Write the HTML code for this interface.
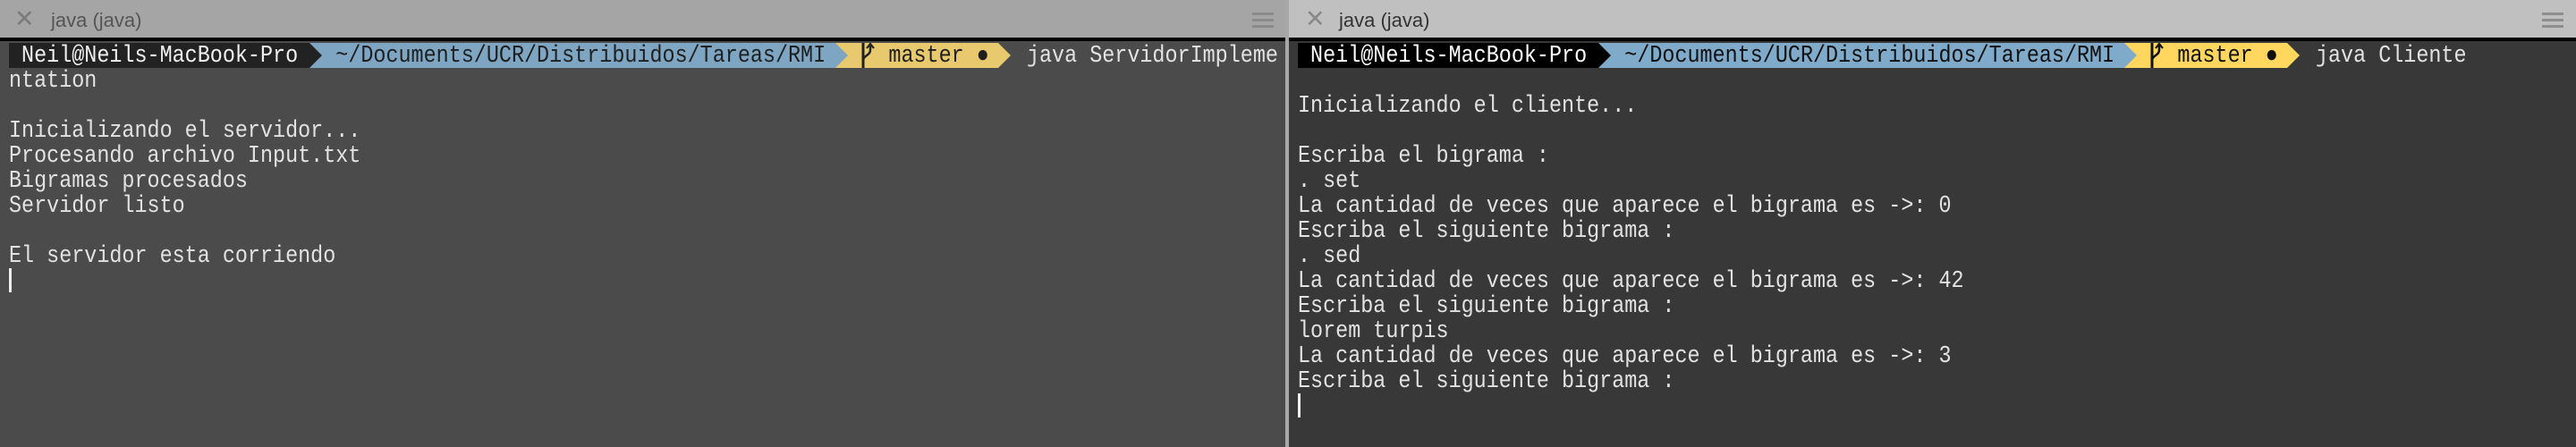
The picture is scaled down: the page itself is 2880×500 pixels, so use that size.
<!DOCTYPE html>
<html><head><meta charset="utf-8"><style>
html,body{margin:0;padding:0;width:2880px;height:500px;overflow:hidden;background:#383838}
.pane{position:absolute;top:0;height:500px;overflow:hidden}
.tab{position:absolute;left:0;top:0;right:0;height:42px;font-family:"Liberation Sans",sans-serif;font-size:22px}
.tab .x{position:absolute;left:16px;top:8px;font-size:27px;line-height:27px}
.tab .t{position:absolute;left:57px;top:10px}
.ham{position:absolute;top:14px;width:24px;height:18px}
.ham i{display:block;height:3px;margin-bottom:4px}
.line{position:absolute;left:0;right:0;top:42px;height:4px;background:#000}
.term{position:absolute;top:48px;left:10px;font-family:"Liberation Mono",monospace;font-size:26.5px;line-height:28px;color:#e2e2e2;white-space:pre;transform:scaleX(0.8834);transform-origin:0 0}
.seg{position:absolute;top:48px;height:28px}
.arr{position:absolute;top:48px;width:0;height:0;border-top:14px solid transparent;border-bottom:14px solid transparent;border-left:14px solid}
.cur{position:absolute;width:3px;height:27px;background:#eee}
</style></head><body>

<!-- LEFT PANE -->
<div class="pane" style="left:0;width:1437px;background:#4b4b4b">
  <div class="tab" style="background:#a5a5a5;color:#555">
    <span class="x" style="color:#7a7a7a">✕</span><span class="t">java (java)</span>
    <div class="ham" style="left:1400px"><i style="background:#8a8a8a"></i><i style="background:#8a8a8a"></i><i style="background:#8a8a8a"></i></div>
  </div>
  <div class="line"></div>
  <div class="seg" style="left:10px;width:336px;background:#222"></div>
  <div class="seg" style="left:346px;width:588px;background:#7ea6c3"></div>
  <div class="arr" style="left:346px;border-left-color:#222"></div>
  <div class="seg" style="left:934px;width:182px;background:#e8c96d"></div>
  <div class="arr" style="left:934px;border-left-color:#7ea6c3"></div>
  <div class="arr" style="left:1116px;border-left-color:#e8c96d"></div>
  <svg style="position:absolute;left:962px;top:48px" width="16" height="28" viewBox="0 0 16 28"><path d="M3 0V28" stroke="#222" stroke-width="3" fill="none"/><path d="M3 20C3 14 11 14 11 8V3" stroke="#222" stroke-width="2.5" fill="none"/><path d="M7 6L11 1L15 6" stroke="#222" stroke-width="2.2" fill="none"/></svg>
  <div class="term"><span style="color:#f0f0f0"> Neil@Neils-MacBook-Pro </span> <span style="color:#1f1f1f"> ~/Documents/UCR/Distribuidos/Tareas/RMI </span> <span style="color:#1f1f1f">   master ● </span>  java ServidorImpleme
ntation

Inicializando el servidor...
Procesando archivo Input.txt
Bigramas procesados
Servidor listo

El servidor esta corriendo</div>
  <div class="cur" style="left:10px;top:300px"></div>
</div>
<div style="position:absolute;left:1437px;top:0;width:4px;height:500px;background:#a8a8a8"></div>

<!-- RIGHT PANE -->
<div class="pane" style="left:1441px;width:1439px;background:#383838">
  <div class="tab" style="background:#c0c0c0;color:#333">
    <span class="x" style="left:18px;color:#888">✕</span><span class="t" style="left:56px">java (java)</span>
    <div class="ham" style="left:1401px"><i style="background:#8e8e8e"></i><i style="background:#8e8e8e"></i><i style="background:#8e8e8e"></i></div>
  </div>
  <div class="line"></div>
  <div class="seg" style="left:10px;width:336px;background:#000"></div>
  <div class="seg" style="left:346px;width:588px;background:#7faac9"></div>
  <div class="arr" style="left:346px;border-left-color:#000"></div>
  <div class="seg" style="left:934px;width:182px;background:#ffd75f"></div>
  <div class="arr" style="left:934px;border-left-color:#7faac9"></div>
  <div class="arr" style="left:1116px;border-left-color:#ffd75f"></div>
  <svg style="position:absolute;left:962px;top:48px" width="16" height="28" viewBox="0 0 16 28"><path d="M3 0V28" stroke="#111" stroke-width="3" fill="none"/><path d="M3 20C3 14 11 14 11 8V3" stroke="#111" stroke-width="2.5" fill="none"/><path d="M7 6L11 1L15 6" stroke="#111" stroke-width="2.2" fill="none"/></svg>
  <div class="term"><span style="color:#fff"> Neil@Neils-MacBook-Pro </span> <span style="color:#111"> ~/Documents/UCR/Distribuidos/Tareas/RMI </span> <span style="color:#111">   master ● </span>  java Cliente

Inicializando el cliente...

Escriba el bigrama :
. set
La cantidad de veces que aparece el bigrama es ->: 0
Escriba el siguiente bigrama :
. sed
La cantidad de veces que aparece el bigrama es ->: 42
Escriba el siguiente bigrama :
lorem turpis
La cantidad de veces que aparece el bigrama es ->: 3
Escriba el siguiente bigrama :</div>
  <div class="cur" style="left:10px;top:440px"></div>
</div>
</body></html>
